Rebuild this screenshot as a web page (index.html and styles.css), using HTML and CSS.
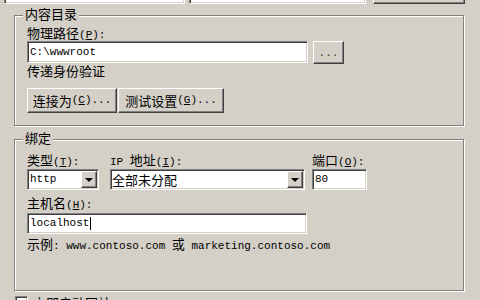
FILE: index.html
```html
<!DOCTYPE html>
<html>
<head>
<meta charset="utf-8">
<link rel="stylesheet" href="styles.css">
</head>
<body>
<div class="toprow">
  <div class="field topa"></div>
  <div class="field topb"></div>
  <div class="btn topbtn"></div>
</div>
<div class="group g1">
  <span class="legend">内容目录</span>
  <div class="lbl">物理路径<span class="m">(<u>P</u>):</span></div>
  <div class="row">
    <div class="field path"><span class="m val">C:\wwwroot</span></div>
    <div class="btn browse"><span class="m dots">...</span></div>
  </div>
  <div class="lbl">传递身份验证</div>
  <div class="btnrow">
    <div class="btn b1">连接为<span class="m">(<u>C</u>)...</span></div>
    <div class="btn b2">测试设置<span class="m">(<u>G</u>)...</span></div>
  </div>
</div>
<div class="group g2">
  <span class="legend">绑定</span>
  <div class="cols">
    <div class="col c1">
      <div class="lbl">类型<span class="m">(<u>T</u>):</span></div>
      <div class="field select"><span class="m val grow">http</span><span class="btn arrow"><span class="tri"></span></span></div>
    </div>
    <div class="col c2">
      <div class="lbl"><span class="m">IP </span>地址<span class="m">(<u>I</u>):</span></div>
      <div class="field select"><span class="grow zval">全部未分配</span><span class="btn arrow"><span class="tri"></span></span></div>
    </div>
    <div class="col c3">
      <div class="lbl">端口<span class="m">(<u>O</u>):</span></div>
      <div class="field select"><span class="m val">80</span></div>
    </div>
  </div>
  <div class="lbl host">主机名<span class="m">(<u>H</u>):</span></div>
  <div class="field hostin"><span class="m val">localhost</span><span class="caret"></span></div>
  <div class="lbl example">示例<span class="m">: www.contoso.com </span>或<span class="m"> marketing.contoso.com</span></div>
</div>
<div class="check"><span class="box"></span><span class="ctext">立即启动网站<span class="m">(<u>M</u>)</span></span></div>
</body>
</html>
```

FILE: styles.css
```css
* { box-sizing: border-box; }
html, body { margin: 0; height: 300px; overflow: hidden; }
body {
  width: 480px;
  background: #d4d0c8;
  color: #000;
  font-family: "Noto Sans CJK SC", sans-serif;
  font-size: 13px;
  line-height: 15px;
  white-space: nowrap;
}
.m { font-family: "Liberation Mono", monospace; font-size: 11px; }
u { text-decoration: underline; }

.field {
  background: #fff;
  border: 1px solid;
  border-color: #808080 #fff #fff #808080;
  box-shadow: inset 1px 1px 0 #404040, inset -1px -1px 0 #d4d0c8;
  padding: 1px;
  display: flex;
  align-items: center;
}
.btn {
  background: #d4d0c8;
  border: 1px solid;
  border-color: #fff #404040 #404040 #fff;
  box-shadow: inset -1px -1px 0 #808080;
  display: flex;
  align-items: center;
  justify-content: center;
}

.toprow { display: flex; align-items: flex-end; height: 4px; overflow: hidden; }
.topa { flex: none; width: 181px; height: 22px; margin-left: 4px; }
.topb { flex: none; width: 177px; height: 22px; margin-left: 4px; }
.topbtn { flex: none; width: 92px; height: 25px; margin-left: 7px; }

.group {
  position: relative;
  width: 450px;
  margin-left: 14px;
  border: 1px solid #808080;
  box-shadow: inset 1px 1px 0 #fff, 1px 1px 0 #fff;
}
.legend {
  position: absolute;
  top: -10px;
  left: 8px;
  padding: 0 2px;
  background: #d4d0c8;
  line-height: 15px;
}
.lbl { height: 15px; }

.g1 { margin-top: 11px; padding: 9px 12px 12px 12px; }
.g1 > .lbl:first-of-type { margin-bottom: 1px; }
.row { display: flex; align-items: center; height: 22px; }
.path { width: 281px; height: 22px; }
.browse { width: 31px; height: 23px; margin-left: 5px; }
.dots { position: relative; top: 1px; color: #404040; }
.val { padding-left: 1px; }
.btnrow { display: flex; margin-top: 10px; }
.b1 { width: 90px; height: 25px; }
.b2 { width: 106px; height: 25px; margin-left: 1px; }

.g2 { margin-top: 13px; padding: 12px 12px 39px 12px; }
.cols { display: flex; }
.col { display: flex; flex-direction: column; }
.c1 { width: 72px; }
.c2 { width: 195px; margin-left: 11px; }
.c3 { width: 55px; margin-left: 7px; }
.select { height: 21px; margin-top: 2px; align-items: stretch; }
.select > span:first-child { display: flex; align-items: center; }
.grow { flex: 1; }
.zval { padding-left: 0; }
.arrow { width: 16px; flex: none; }
.tri {
  width: 0; height: 0;
  border-left: 4px solid transparent;
  border-right: 4px solid transparent;
  border-top: 4px solid #000;
}
.host { margin-top: 5px; }
.hostin { width: 280px; height: 21px; margin-top: 3px; }
.caret { width: 1px; height: 13px; background: #000; margin-left: 1px; }
.example { margin-top: 2px; }

.check { display: flex; align-items: flex-start; margin: 5px 0 0 15px; }
.box {
  width: 13px; height: 13px; flex: none;
  background: #fff;
  border: 1px solid;
  border-color: #808080 #fff #fff #808080;
  box-shadow: inset 1px 1px 0 #404040, inset -1px -1px 0 #d4d0c8;
}
.ctext { margin-left: 5px; margin-top: -1px; }
```
